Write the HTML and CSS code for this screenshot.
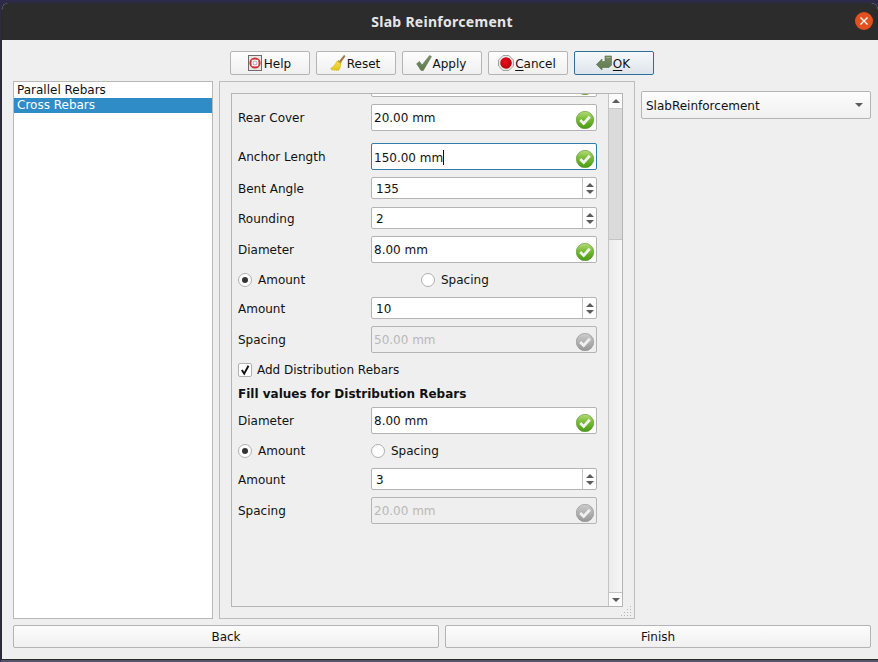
FILE: index.html
```html
<!DOCTYPE html>
<html lang="en">
<head>
<meta charset="utf-8">
<title>Slab Reinforcement</title>
<link rel="stylesheet" href="styles.css">
</head>
<body>
<svg class="defs" width="0" height="0" aria-hidden="true">
  <defs>
    <linearGradient id="gGreen" x1="0" y1="0" x2="0" y2="1">
      <stop offset="0" stop-color="#b4dc78"/><stop offset=".5" stop-color="#72b82e"/><stop offset="1" stop-color="#4a9a18"/>
    </linearGradient>
    <linearGradient id="gGrey" x1="0" y1="0" x2="0" y2="1">
      <stop offset="0" stop-color="#cdcdcd"/><stop offset="1" stop-color="#969696"/>
    </linearGradient>
    <linearGradient id="gBroom" x1="0" y1="0" x2="0" y2="1">
      <stop offset="0" stop-color="#f4e24a"/><stop offset="1" stop-color="#e4c21c"/>
    </linearGradient>
    <linearGradient id="gMark" x1="0" y1="0" x2="0" y2="1">
      <stop offset="0" stop-color="#7c8e70"/><stop offset="1" stop-color="#5f7a48"/>
    </linearGradient>
    <radialGradient id="gRed" cx=".45" cy=".4" r=".6">
      <stop offset="0" stop-color="#e8101c"/><stop offset="1" stop-color="#b80008"/>
    </radialGradient>
    <symbol id="ok" viewBox="0 0 18 18">
      <circle cx="9" cy="9" r="8.700" fill="url(#gGreen)" stroke="#55922e" stroke-width=".6"/>
      <path d="M4.200 9l3.500 3.500 6.100-6.700" fill="none" stroke="#f2f2ee" stroke-width="2.800"/>
    </symbol>
    <symbol id="off" viewBox="0 0 18 18">
      <circle cx="9" cy="9" r="8.700" fill="url(#gGrey)" stroke="#8c8c8c" stroke-width=".6"/>
      <path d="M4.200 9l3.500 3.500 6.100-6.700" fill="none" stroke="#f0f0f0" stroke-width="2.800"/>
    </symbol>
  </defs>
</svg>
<div class="window">
  <header class="titlebar">
    <h1 class="title">Slab Reinforcement</h1>
    <span class="close">
      <svg width="10" height="10" viewBox="0 0 10 10"><path d="M1.500 1.500l7 7M8.500 1.500l-7 7" stroke="#fff" stroke-width="1.400"/></svg>
    </span>
  </header>
  <main class="content">
    <div class="toolbar">
      <button class="btn">
        <svg class="ico" viewBox="0 0 16 16"><rect x="1.500" y=".5" width="13" height="15" fill="#e8e8e4" stroke="#6c6c6c"/><circle cx="8" cy="8" r="4.600" fill="#fff" stroke="#cc3030" stroke-width="2"/><path d="M4.800 4.800l2 2M11.200 4.800l-2 2M4.800 11.200l2-2M11.200 11.200l-2-2" stroke="#eee" stroke-width="1.200"/><circle cx="8" cy="8" r="2" fill="#f6f6f6" stroke="#777" stroke-width=".6"/></svg>
        <span>Help</span>
      </button>
      <button class="btn">
        <svg class="ico" viewBox="0 0 16 16"><path d="M14 .3l1.200.9-4.600 6.300-1.400-1z" fill="#a87a3a" stroke="#7c5824" stroke-width=".4"/><path d="M8.500 5l3.200 2.400-1 1.500-3.400-2.500z" fill="#c49a24"/><path d="M7 6l4 3c-.3 2.800-1.400 5.300-2.800 6.700l-1-1.300-.5 1.400-1.500-1.200-.6 1.100-1.200-1.200-1.100.7L.5 13.500C3.200 12 5.400 9.600 7 6z" fill="url(#gBroom)" stroke="#c8a414" stroke-width=".4"/></svg>
        <span>Reset</span>
      </button>
      <button class="btn">
        <svg class="ico" viewBox="0 0 16 16"><path d="M.6 8.800l2.900-2.300 2.500 3.500L13.600.5l1.900 1.100L7.300 15.500H5z" fill="url(#gMark)" stroke="#5a7048" stroke-width=".5"/></svg>
        <span>Apply</span>
      </button>
      <button class="btn">
        <svg class="ico" viewBox="0 0 16 16"><path d="M5 .6h6L15.400 5v6L11 15.400H5L.6 11V5z" fill="#f4f0f0" stroke="#999"/><circle cx="8" cy="8" r="5.800" fill="url(#gRed)"/></svg>
        <span><u>C</u>ancel</span>
      </button>
      <button class="btn btn-default">
        <svg class="ico" viewBox="0 0 16 16"><path d="M.4 9.500L6 4v2.500h3V1h6.500v9L13 12.500H6V15z" fill="url(#gMark)" stroke="#566b42" stroke-width=".6"/><path d="M10 2h4.500v1H10z" fill="#a2b48e"/></svg>
        <span><u>O</u>K</span>
      </button>
    </div>
    <div class="columns">
      <ul class="list">
        <li class="item">Parallel Rebars</li>
        <li class="item item-selected">Cross Rebars</li>
      </ul>
      <section class="panel">
        <div class="scroll">
          <div class="form">
            <div class="row row-tall gap-0"><span class="label"></span><div class="field"><svg class="state"><use href="#ok"/></svg></div></div>
            <div class="row row-tall gap-7"><span class="label">Rear Cover</span><div class="field"><span class="value">20.00 mm</span><svg class="state"><use href="#ok"/></svg></div></div>
            <div class="row row-tall gap-12"><span class="label">Anchor Length</span><div class="field field-focus"><span class="value">150.00 mm<i class="caret"></i></span><svg class="state"><use href="#ok"/></svg></div></div>
            <div class="row row-spin gap-7"><span class="label">Bent Angle</span><div class="field"><span class="value value-spin">135</span><span class="spin"><i class="up"></i><i class="down"></i></span></div></div>
            <div class="row row-spin gap-8"><span class="label">Rounding</span><div class="field"><span class="value value-spin">2</span><span class="spin"><i class="up"></i><i class="down"></i></span></div></div>
            <div class="row row-tall gap-7"><span class="label">Diameter</span><div class="field"><span class="value">8.00 mm</span><svg class="state"><use href="#ok"/></svg></div></div>
            <div class="row row-radio gap-6"><span class="radio radio-wide"><i class="dot on"></i>Amount</span><span class="radio"><i class="dot"></i>Spacing</span></div>
            <div class="row row-spin gap-6"><span class="label">Amount</span><div class="field"><span class="value value-spin">10</span><span class="spin"><i class="up"></i><i class="down"></i></span></div></div>
            <div class="row row-tall gap-7"><span class="label">Spacing</span><div class="field field-off"><span class="value">50.00 mm</span><svg class="state"><use href="#off"/></svg></div></div>
            <div class="row row-check gap-6"><span class="check"><svg width="12" height="12" viewBox="0 0 12 12"><path d="M2.800 6l2.400 3.600L9.500 1.800" fill="none" stroke="#111" stroke-width="1.900"/></svg></span>Add Distribution Rebars</div>
            <div class="row row-head gap-3">Fill values for Distribution Rebars</div>
            <div class="row row-tall gap-3"><span class="label">Diameter</span><div class="field"><span class="value">8.00 mm</span><svg class="state"><use href="#ok"/></svg></div></div>
            <div class="row row-radio gap-6"><span class="radio radio-near"><i class="dot on"></i>Amount</span><span class="radio"><i class="dot"></i>Spacing</span></div>
            <div class="row row-spin gap-6"><span class="label">Amount</span><div class="field"><span class="value value-spin">3</span><span class="spin"><i class="up"></i><i class="down"></i></span></div></div>
            <div class="row row-tall gap-7"><span class="label">Spacing</span><div class="field field-off"><span class="value">20.00 mm</span><svg class="state"><use href="#off"/></svg></div></div>
          </div>
          <div class="scrollbar">
            <span class="sb-btn"><i class="up"></i></span>
            <span class="sb-thumb"></span>
            <span class="sb-track"></span>
            <span class="sb-btn sb-btn-end"><i class="down"></i></span>
          </div>
        </div>
        <svg class="grip" width="12" height="12" viewBox="0 0 12 12"><path d="M9 1h1v1H9zM6 4h1v1H6zM9 4h1v1H9zM3 7h1v1H3zM6 7h1v1H6zM9 7h1v1H9zM0 10h1v1H0zM3 10h1v1H3zM6 10h1v1H6zM9 10h1v1H9z" fill="#b4b4b4"/></svg>
      </section>
      <aside class="side">
        <div class="combo"><span class="combo-text">SlabReinforcement</span><i class="down"></i></div>
      </aside>
    </div>
    <div class="footer">
      <button class="btn btn-wide"><span class="wide-text">Back</span></button>
      <button class="btn btn-wide"><span class="wide-text">Finish</span></button>
    </div>
  </main>
</div>
</body>
</html>
```
FILE: styles.css
```css
* { box-sizing: border-box; }
html, body { margin: 0; height: 100%; }
body {
  width: 878px;
  height: 662px;
  overflow: hidden;
  background: #2c2a48;
  font: 12px/15px "DejaVu Sans", sans-serif;
  color: #111;
}
.defs { display: block; height: 0; }
.window {
  margin: 3px 0 0 1px;
  width: 877px;
  height: 657px;
  background: #efefef;
  border-left: 1px solid #2a2a2a;
  border-bottom: 1px solid #2a2a2a;
  border-radius: 7px 7px 0 0;
  overflow: hidden;
  display: flex;
  flex-direction: column;
  box-shadow: 0 3px 0 #55556a;
}
.titlebar {
  height: 37px;
  flex: none;
  background: #2c2c2c;
  display: flex;
  align-items: center;
  justify-content: center;
  position: relative;
}
.title {
  margin: 0;
  font: 700 14px/1 "Noto Sans", sans-serif;
  color: #e6e6e6;
  letter-spacing: .28px;
  position: relative;
  left: 2px;
}
.close {
  position: absolute;
  right: 5px;
  top: 9px;
  width: 18px;
  height: 18px;
  border-radius: 50%;
  background: #e2501f;
  display: flex;
  align-items: center;
  justify-content: center;
}
.content {
  flex: 1;
  padding: 11px 7px 0 11px;
  display: flex;
  flex-direction: column;
}
.toolbar {
  display: flex;
  gap: 6px;
  height: 24px;
  margin-left: 217px;
}
.btn {
  width: 80px;
  height: 24px;
  padding: 0;
  border: 1px solid #b4b4b4;
  border-radius: 2px;
  background: linear-gradient(#fdfdfd, #f0f0f0);
  font: inherit;
  color: #111;
  display: flex;
  align-items: center;
  justify-content: center;
  gap: 1px;
}
.toolbar .btn { padding-right: 2px; }
.toolbar .btn span, .wide-text, .combo-text { padding-top: 2px; }
.btn-default {
  border-color: #2f6f96;
  background: linear-gradient(#f6f9fb, #dde4ea);
}
.ico { width: 16px; height: 16px; flex: none; }
.columns {
  display: flex;
  gap: 6px;
  margin-top: 6px;
  height: 538px;
}
.list {
  width: 200px;
  margin: 0;
  padding: 1px 0;
  list-style: none;
  background: #fff;
  border: 1px solid #b8b8b8;
}
.item { height: 15px; padding-left: 3px; line-height: 15px; }
.item-selected { background: #308cc6; color: #fff; }
.panel {
  width: 416px;
  border: 1px solid #bcbcbc;
  padding: 11px;
  position: relative;
}
.scroll {
  height: 514px;
  border: 1px solid #b4b4b4;
  display: flex;
  overflow: hidden;
}
.form {
  flex: 1;
  min-width: 0;
  padding: 0 11px 0 6px;
  margin-top: -24px;
}
.row { display: flex; align-items: center; width: 359px; }
.row-tall { height: 27px; }
.row-spin { height: 22px; }
.row-radio { height: 22px; }
.row-check { height: 22px; }
.row-head { height: 20px; font-weight: 700; }
.gap-0 { margin-top: 0; }
.gap-3 { margin-top: 3px; }
.gap-6 { margin-top: 6px; }
.gap-7 { margin-top: 7px; }
.gap-8 { margin-top: 8px; }
.gap-12 { margin-top: 12px; }
.label { width: 133px; flex: none; padding-top: 2px; }
.field {
  width: 226px;
  height: 100%;
  flex: none;
  background: #fff;
  border: 1px solid #b4b4b4;
  border-radius: 2px;
  display: flex;
  align-items: center;
  position: relative;
}
.field-focus { border-color: #2f7ca8; }
.field-off { background: #efefef; color: #b8b8b8; }
.value { padding: 2px 0 0 2px; flex: 1; }
.value-spin { padding-left: 4px; }
.caret {
  display: inline-block;
  width: 1px;
  height: 15px;
  background: #111;
  vertical-align: -3px;
}
.state {
  position: absolute;
  right: 2px;
  top: 6px;
  width: 18px;
  height: 18px;
}
.spin {
  width: 14px;
  height: 100%;
  flex: none;
  border-left: 1px solid #c4c4c4;
  display: flex;
  flex-direction: column;
  align-items: center;
  justify-content: center;
  gap: 3px;
}
.up, .down {
  display: block;
  width: 0;
  height: 0;
  border-left: 4px solid transparent;
  border-right: 4px solid transparent;
}
.up { border-bottom: 4px solid #5c5c5c; }
.down { border-top: 4px solid #5c5c5c; }
.radio { display: flex; align-items: center; gap: 6px; }
.radio-wide { width: 183px; }
.radio-near { width: 133px; }
.dot {
  width: 14px;
  height: 14px;
  border: 1px solid #b0b0b0;
  border-radius: 50%;
  background: #fff;
  display: flex;
  align-items: center;
  justify-content: center;
}
.dot.on::after {
  content: "";
  width: 6px;
  height: 6px;
  border-radius: 50%;
  background: #333;
}
.row-check { gap: 5px; }
.check {
  width: 14px;
  height: 14px;
  border: 1px solid #b0b0b0;
  border-radius: 2px;
  background: #fff;
  display: flex;
  align-items: center;
  justify-content: center;
}
.scrollbar {
  width: 14px;
  flex: none;
  border-left: 1px solid #c4c4c4;
  display: flex;
  flex-direction: column;
  background: #efefef;
}
.sb-btn {
  height: 14px;
  flex: none;
  background: #fbfbfb;
  display: flex;
  align-items: center;
  justify-content: center;
}
.sb-btn-end { border-top: 1px solid #c4c4c4; }
.sb-thumb { height: 132px; flex: none; background: #dadada; border-top: 1px solid #c8c8c8; border-bottom: 1px solid #c4c4c4; }
.sb-track { flex: 1; background: linear-gradient(90deg, #ececec, #f6f6f6); }
.grip { position: absolute; right: 1px; bottom: 1px; }
.side { width: 230px; padding-top: 10px; }
.combo {
  height: 28px;
  border: 1px solid #b4b4b4;
  border-radius: 2px;
  background: linear-gradient(#fdfdfd, #f0f0f0);
  display: flex;
  align-items: center;
  justify-content: space-between;
  padding: 0 7px 0 4px;
}
.footer { display: flex; gap: 6px; margin-top: 6px; }
.btn-wide { width: 426px; height: 23px; }
u { text-underline-offset: 2px; }
```
